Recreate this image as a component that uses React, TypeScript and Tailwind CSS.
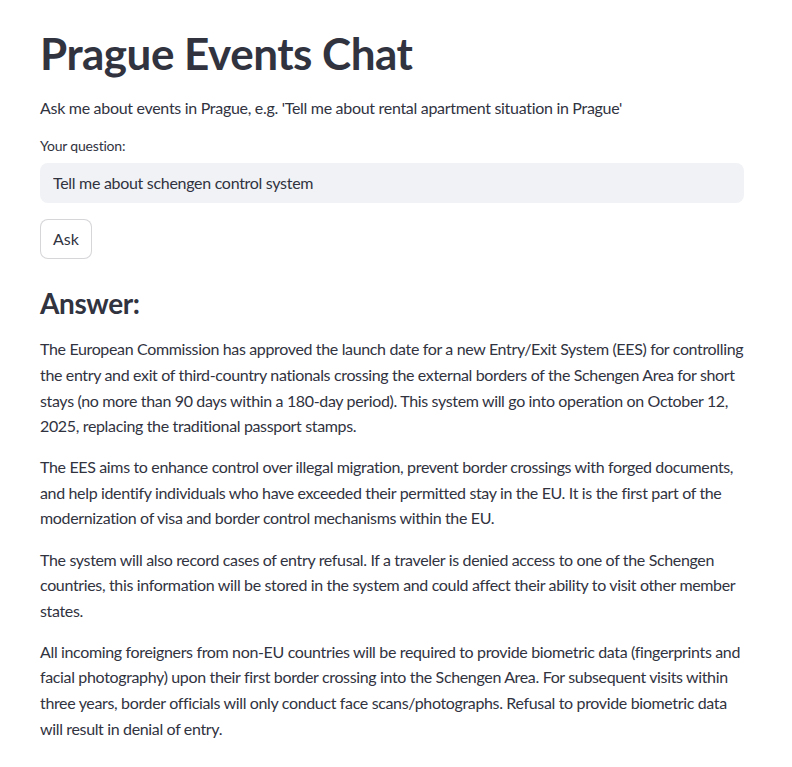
import { useState } from 'react';

const paragraphs: string[][] = [
  [
    'The European Commission has approved the launch date for a new Entry/Exit System (EES) for controlling',
    'the entry and exit of third-country nationals crossing the external borders of the Schengen Area for short',
    'stays (no more than 90 days within a 180-day period). This system will go into operation on October 12,',
    '2025, replacing the traditional passport stamps.',
  ],
  [
    'The EES aims to enhance control over illegal migration, prevent border crossings with forged documents,',
    'and help identify individuals who have exceeded their permitted stay in the EU. It is the first part of the',
    'modernization of visa and border control mechanisms within the EU.',
  ],
  [
    'The system will also record cases of entry refusal. If a traveler is denied access to one of the Schengen',
    'countries, this information will be stored in the system and could affect their ability to visit other member',
    'states.',
  ],
  [
    'All incoming foreigners from non-EU countries will be required to provide biometric data (fingerprints and',
    'facial photography) upon their first border crossing into the Schengen Area. For subsequent visits within',
    'three years, border officials will only conduct face scans/photographs. Refusal to provide biometric data',
    'will result in denial of entry.',
  ],
];

export default function App() {
  const [question, setQuestion] = useState('Tell me about schengen control system');

  return (
    <div className="min-h-screen bg-white text-[#31333f] font-['Lato','Liberation_Sans',sans-serif]">
      <div className="w-[704px] ml-[40px] pt-[27px]">
        <h1 className="text-[44px] font-bold leading-[1.2] tracking-[-0.5px] pb-[15px]">Prague Events Chat</h1>

        <p className="text-[16px] leading-[1.6] tracking-[-0.3px] mb-[15px]">
          Ask me about events in Prague, e.g. 'Tell me about rental apartment situation in Prague'
        </p>

        <label className="block text-[14px] leading-[1.6] tracking-[-0.2px] mb-[5px]">Your question:</label>
        <input
          value={question}
          onChange={(e) => setQuestion(e.target.value)}
          className="w-full h-[40px] rounded-[8px] bg-[#f0f2f6] px-[13px] text-[16px] tracking-[-0.3px] outline-none"
        />

        <button className="mt-[16px] h-[40px] px-[12px] rounded-[8px] border border-[#31333f33] bg-white text-[16px]">
          Ask
        </button>

        <h3 className="mt-[28px] mb-[16px] text-[28px] font-bold leading-[1.2] tracking-[-0.4px]">Answer:</h3>

        {paragraphs.map((lines, i) => (
          <p key={i} className="text-[16px] leading-[1.6] tracking-[-0.35px] mb-[15.5px] whitespace-nowrap">
            {lines.map((line, j) => (
              <span key={j} className="block">{line}</span>
            ))}
          </p>
        ))}
      </div>
    </div>
  );
}
